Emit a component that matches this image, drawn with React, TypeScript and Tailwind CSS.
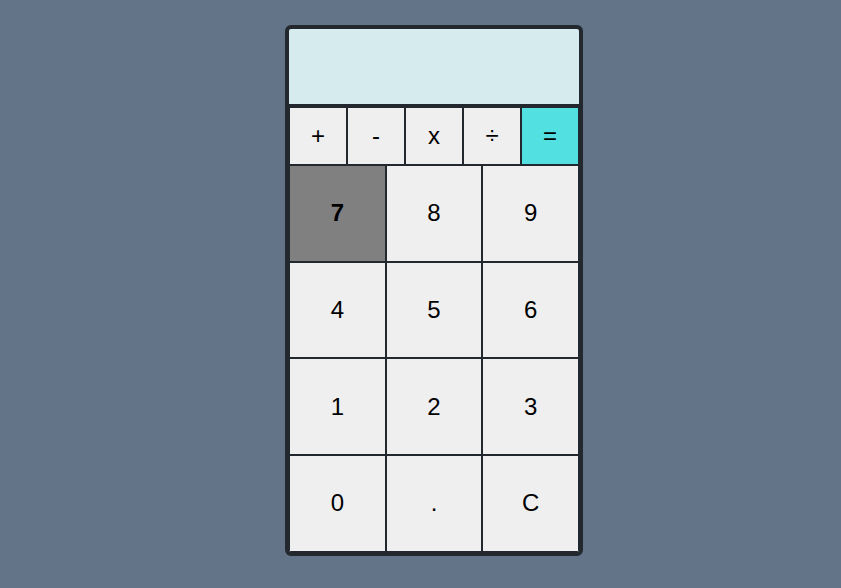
import React from 'react';

const ops = ['+', '-', 'x', '÷'];
const digits = ['7', '8', '9', '4', '5', '6', '1', '2', '3', '0', '.', 'C'];

export default function App() {
  return (
    <div className="min-h-[588px] bg-[#637489] flex justify-center items-start pt-[25px] pl-[27px] font-['Liberation_Sans',Arial,sans-serif]">
      <div className="w-[298px] border-4 border-[#23282f] rounded-[6px] bg-[#23282f] overflow-hidden">
        <div className="h-[78px] bg-[#d6ebee] border-b-[3px] border-[#23282f]" />
        <div className="grid grid-cols-5">
          {ops.map((op) => (
            <button
              key={op}
              className="h-[58px] border border-[#23282f] bg-[#efefef] text-[24px] text-black flex items-center justify-center"
            >
              {op}
            </button>
          ))}
          <button className="h-[58px] border border-[#23282f] bg-[#53e0e0] text-[24px] text-black flex items-center justify-center">
            =
          </button>
        </div>
        <div className="grid grid-cols-3">
          {digits.map((d) => (
            <button
              key={d}
              className={
                d === '7'
                  ? 'aspect-square border border-[#23282f] bg-[#808080] text-[24px] font-bold text-black flex items-center justify-center'
                  : 'aspect-square border border-[#23282f] bg-[#efefef] text-[24px] text-black flex items-center justify-center'
              }
            >
              {d}
            </button>
          ))}
        </div>
      </div>
    </div>
  );
}
